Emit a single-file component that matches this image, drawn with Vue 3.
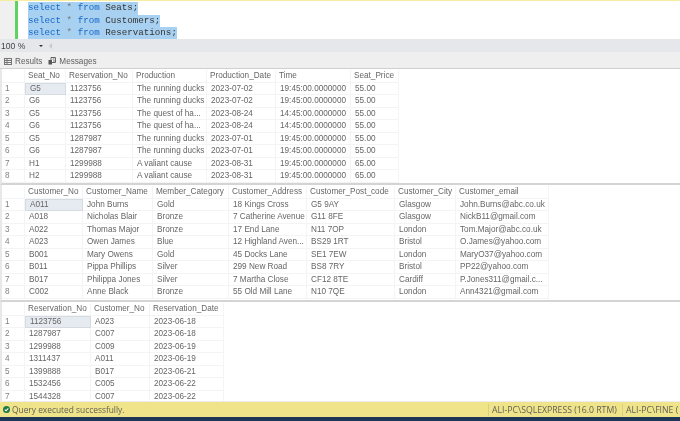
<script setup>
const queries = ['Seats', 'Customers', 'Reservations']
const grids = [
  {
    cls: 'g1',
    widths: [25, 41, 67, 74, 69, 75, 48],
    head: ['Seat_No', 'Reservation_No', 'Production', 'Production_Date', 'Time', 'Seat_Price'],
    rows: [
      ['G5', '1123756', 'The running ducks', '2023-07-02', '19:45:00.0000000', '55.00'],
      ['G6', '1123756', 'The running ducks', '2023-07-02', '19:45:00.0000000', '55.00'],
      ['G5', '1123756', 'The quest of ha...', '2023-08-24', '14:45:00.0000000', '55.00'],
      ['G6', '1123756', 'The quest of ha...', '2023-08-24', '14:45:00.0000000', '55.00'],
      ['G5', '1287987', 'The running ducks', '2023-07-01', '19:45:00.0000000', '55.00'],
      ['G6', '1287987', 'The running ducks', '2023-07-01', '19:45:00.0000000', '55.00'],
      ['H1', '1299988', 'A valiant cause', '2023-08-31', '19:45:00.0000000', '65.00'],
      ['H2', '1299988', 'A valiant cause', '2023-08-31', '19:45:00.0000000', '65.00']
    ]
  },
  {
    cls: 'g2',
    widths: [25, 58, 70, 76, 78, 88, 61, 93],
    head: ['Customer_No', 'Customer_Name', 'Member_Category', 'Customer_Address', 'Customer_Post_code', 'Customer_City', 'Customer_email'],
    rows: [
      ['A011', 'John Burns', 'Gold', '18 Kings Cross', 'G5 9AY', 'Glasgow', 'John.Burns@abc.co.uk'],
      ['A018', 'Nicholas Blair', 'Bronze', '7 Catherine Avenue', 'G11 8FE', 'Glasgow', 'NickB11@gmail.com'],
      ['A022', 'Thomas Major', 'Bronze', '17 End Lane', 'N11 7OP', 'London', 'Tom.Major@abc.co.uk'],
      ['A023', 'Owen James', 'Blue', '12 Highland Aven...', 'BS29 1RT', 'Bristol', 'O.James@yahoo.com'],
      ['B001', 'Mary Owens', 'Gold', '45 Docks Lane', 'SE1 7EW', 'London', 'MaryO37@yahoo.com'],
      ['B011', 'Pippa Phillips', 'Silver', '299 New Road', 'BS8 7RY', 'Bristol', 'PP22@yahoo.com'],
      ['B017', 'Philippa Jones', 'Silver', '7 Martha Close', 'CF12 8TE', 'Cardiff', 'P.Jones311@gmail.c...'],
      ['C002', 'Anne Black', 'Bronze', '55 Old Mill Lane', 'N10 7QE', 'London', 'Ann4321@gmail.com']
    ]
  },
  {
    cls: 'g3',
    widths: [25, 66, 59, 74],
    head: ['Reservation_No', 'Customer_No', 'Reservation_Date'],
    rows: [
      ['1123756', 'A023', '2023-06-18'],
      ['1287987', 'C007', '2023-06-18'],
      ['1299988', 'C009', '2023-06-19'],
      ['1311437', 'A011', '2023-06-19'],
      ['1399888', 'B017', '2023-06-21'],
      ['1532456', 'C005', '2023-06-22'],
      ['1544328', 'C007', '2023-06-22']
    ]
  }
]
const cols = (w) => ({ gridTemplateColumns: w.map((n) => n + 'px').join(' ') })
</script>

<template>
  <div class="app">
    <div class="editor">
      <div class="gutter"></div>
      <div class="changebar"></div>
      <div class="code">
        <div v-for="q in queries" :key="q" class="line"><span class="sel"><span class="kw">select</span> <span class="op">*</span> <span class="kw">from</span> {{ q }};</span></div>
      </div>
    </div>
    <div class="zoombar">
      <span class="zoomval">100 %</span>
      <span class="caret"></span>
      <span class="scrollleft"></span>
    </div>
    <div class="tabs">
      <span class="tab active">
        <svg width="8" height="7" viewBox="0 0 8 7"><path d="M0 .5h8M0 2.5h8M0 4.5h8M0 6.5h8M.5 0v7M7.5 0v7M3 1v6" stroke="#777" fill="none"/></svg>
        Results
      </span>
      <span class="tab">
        <svg width="8" height="8" viewBox="0 0 8 8"><path d="M3 .5h4.5v5H3z" fill="#fff" stroke="#666"/><path d="M.5 3h3.5v4.5H.5z" fill="#555"/><path d="M4.5 2h2M5 4h2" stroke="#666"/></svg>
        Messages
      </span>
    </div>
    <div class="results">
      <div v-for="g in grids" :key="g.cls" class="grid" :class="g.cls">
        <div class="row header" :style="cols(g.widths)">
          <span class="cell rh"></span>
          <span v-for="h in g.head" :key="h" class="cell">{{ h }}</span>
        </div>
        <div v-for="(r, i) in g.rows" :key="i" class="row" :style="cols(g.widths)">
          <span class="cell rh">{{ i + 1 }}</span>
          <span v-for="(c, j) in r" :key="j" class="cell" :class="{ current: i === 0 && j === 0 }">{{ c }}</span>
        </div>
      </div>
    </div>
    <div class="status">
      <span class="statusmain">
        <svg width="7" height="7" viewBox="0 0 9 9"><circle cx="4.5" cy="4.5" r="4.5" fill="#1f7a45"/><path d="M2.3 4.6l1.6 1.6 2.9-3.1" stroke="#fff" stroke-width="1.3" fill="none"/></svg>
        Query executed successfully.
      </span>
      <span class="statusitem server">ALI-PC\SQLEXPRESS (16.0 RTM)</span>
      <span class="statusitem user">ALI-PC\FINE (</span>
    </div>
    <div class="footer"></div>
  </div>
</template>

<style>
html, body { margin: 0; background: #fff; }
</style>

<style scoped>
.app {
  width: 680px;
  height: 421px;
  display: flex;
  flex-direction: column;
  overflow: hidden;
  background: #fff;
  filter: blur(0.45px);
  font-family: "Liberation Sans", Arial, sans-serif;
}
.editor {
  height: 39px;
  box-sizing: border-box;
  display: flex;
  border-top: 1px solid #f6eda0;
  flex: none;
}
.gutter { width: 15px; background: #f0f0f0; }
.changebar { width: 3px; background: #5fd35f; }
.code {
  padding: 1px 0 0 10px;
  font: 9.2px/12.6px "Liberation Mono", monospace;
  color: #333;
}
.line { height: 12.6px; white-space: pre; }
.sel { background: #a8d0f0; display: inline-block; height: 12.6px; }
.kw { color: #1769c9; }
.op { color: #777; }
.zoombar {
  height: 13px;
  background: #e6e7ea;
  display: flex;
  align-items: center;
  flex: none;
  font-size: 8.6px;
  color: #444;
}
.zoomval { padding-left: 1px; width: 38px; }
.caret {
  width: 0; height: 0;
  border-left: 2px solid transparent;
  border-right: 2px solid transparent;
  border-top: 2px solid #333;
}
.scrollleft {
  margin-left: 6px;
  width: 0; height: 0;
  border-top: 3px solid transparent;
  border-bottom: 3px solid transparent;
  border-right: 3px solid #c8c8cc;
}
.tabs {
  height: 17px;
  background: #efeff0;
  border-bottom: 1px solid #cfcfd1;
  box-sizing: border-box;
  display: flex;
  align-items: center;
  gap: 6px;
  padding: 2px 0 0 4px;
  flex: none;
  font-size: 8.2px;
  color: #5e5e5e;
}
.tab { display: flex; align-items: center; gap: 3px; }
.results {
  flex: 1;
  min-height: 0;
  overflow: hidden;
}
.grid {
  border-left: 2px solid #e8e8e8;
  box-sizing: border-box;
  overflow: hidden;
}
.g1 { height: 116px; padding-top: 1px; border-bottom: 2px solid #d4d4d4; }
.g2 { height: 117px; padding-top: 1px; border-bottom: 2px solid #d4d4d4; }
.g3 { height: 99px; padding-top: 1px; }
.row {
  display: grid;
  height: 12.5px;
  margin-left: -2px;
  font-size: 8.2px;
  line-height: 12.5px;
  color: #666;
}
.cell {
  box-sizing: border-box;
  padding-left: 4px;
  white-space: nowrap;
  overflow: hidden;
  border-right: 1px solid #f3f4f6;
  border-bottom: 1px solid #f3f4f6;
}
.header .cell { padding-left: 3px; }
.rh { padding-left: 5px; color: #808080; }
.current { background: #e6ebf1; border: 1px solid #d6dbe1; line-height: 10.5px; }
.status {
  height: 16px;
  background: #efe48a;
  border-top: 1px solid #ececec;
  box-sizing: border-box;
  display: flex;
  align-items: center;
  flex: none;
  font-family: "Open Sans", sans-serif;
  font-size: 8.4px;
  color: #5f5f55;
  white-space: nowrap;
}
.statusmain { display: flex; align-items: center; gap: 2px; padding-left: 3px; width: 485px; }
.statusitem { border-left: 1px solid #d8cf82; padding-left: 3px; font-size: 8.7px; }
.server { width: 134px; flex: none; box-sizing: border-box; }
.footer { height: 4px; background: #1d3557; flex: none; }
</style>
